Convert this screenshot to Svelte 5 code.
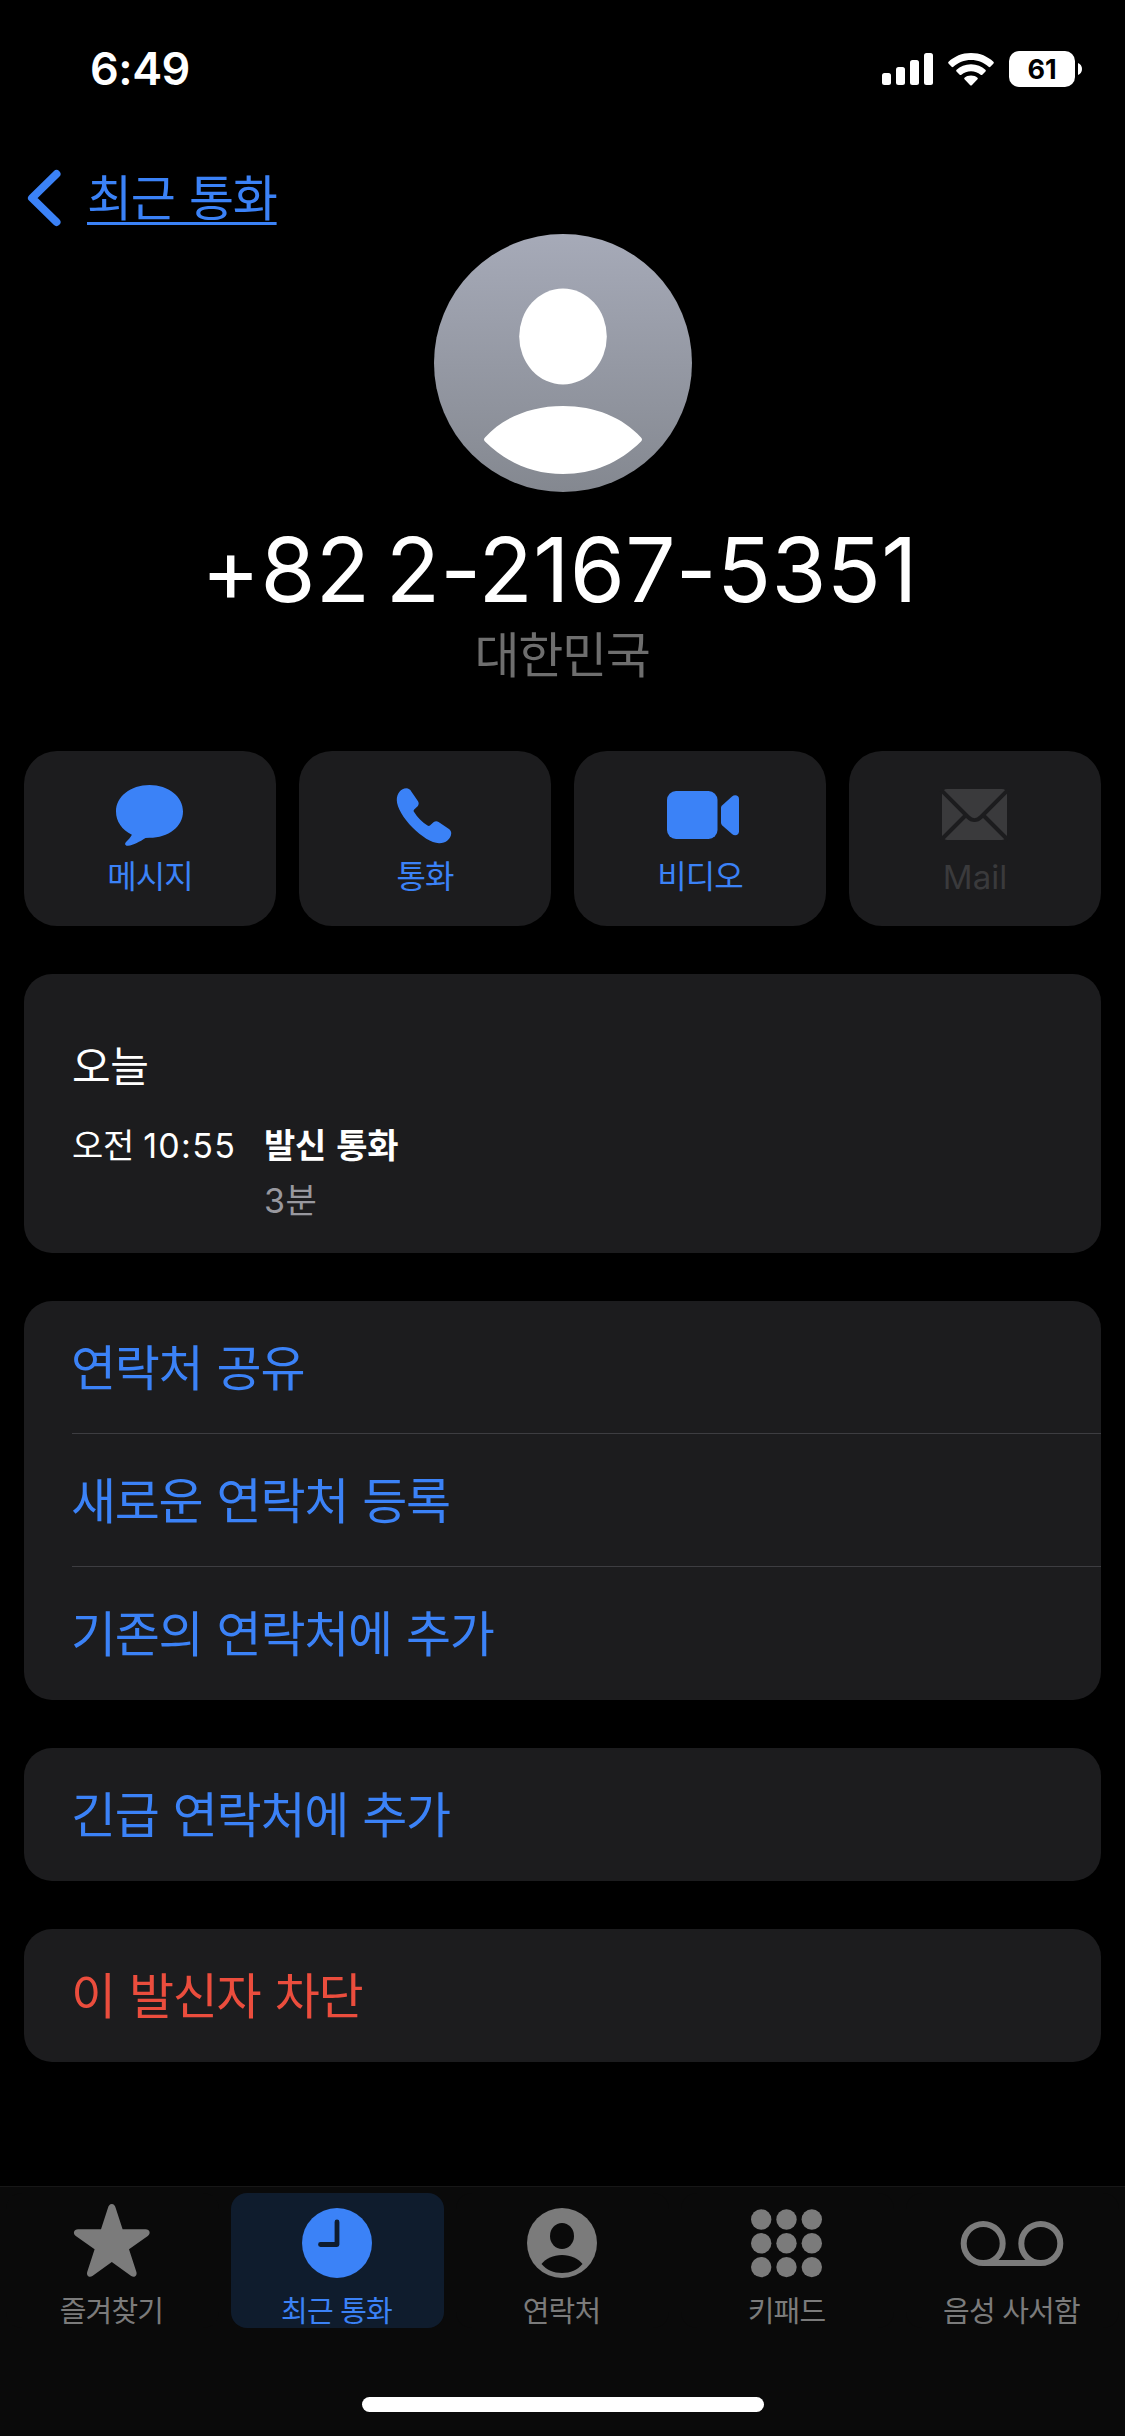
<script lang="ts">
	const actions = [
		{ id: 'message', label: '메시지', disabled: false },
		{ id: 'call', label: '통화', disabled: false },
		{ id: 'video', label: '비디오', disabled: false },
		{ id: 'mail', label: 'Mail', disabled: true }
	];

	const groups = [
		{ danger: false, rows: ['연락처 공유', '새로운 연락처 등록', '기존의 연락처에 추가'] },
		{ danger: false, rows: ['긴급 연락처에 추가'] },
		{ danger: true, rows: ['이 발신자 차단'] }
	];

	const tabs = [
		{ id: 'favorites', label: '즐겨찾기' },
		{ id: 'recents', label: '최근 통화' },
		{ id: 'contacts', label: '연락처' },
		{ id: 'keypad', label: '키패드' },
		{ id: 'voicemail', label: '음성 사서함' }
	];

	let active = $state('recents');
	const dots = [0, 1, 2];
</script>

<div class="screen">
	<header class="status">
		<span class="time">6:49</span>
		<div class="indicators">
			<svg class="signal" width="51" height="32" viewBox="0 0 51 32">
				<rect x="0" y="20" width="9" height="12" rx="2.5" />
				<rect x="14" y="14" width="9" height="18" rx="2.5" />
				<rect x="28" y="7" width="9" height="25" rx="2.5" />
				<rect x="42" y="0" width="9" height="32" rx="2.5" />
			</svg>
			<svg class="wifi" width="46" height="33" viewBox="0 0 46 33">
				<path d="M23 0C32 0 39.8 3.4 45.4 8.8C46 9.4 46 10 45.5 10.6L42.4 13.8C41.8 14.4 41.2 14.4 40.6 13.8C36 9.5 29.8 7 23 7S10 9.5 5.4 13.8C4.8 14.4 4.2 14.4 3.6 13.8L.5 10.6C0 10 0 9.4 .6 8.8C6.2 3.4 14 0 23 0Z" />
				<path d="M23 11.2C28.8 11.2 33.8 13.3 37.4 16.7C38 17.3 38 17.9 37.5 18.5L34.3 21.7C33.8 22.3 33.2 22.2 32.6 21.7C30 19.4 26.7 18.2 23 18.2S16 19.4 13.4 21.7C12.8 22.2 12.2 22.3 11.7 21.7L8.5 18.5C8 17.9 8 17.3 8.6 16.7C12.2 13.3 17.2 11.2 23 11.2Z" />
				<path d="M23 22.4C25.6 22.4 27.8 23.2 29.5 24.7C30 25.2 30 25.8 29.5 26.3L23.8 32.2C23.3 32.7 22.7 32.7 22.2 32.2L16.5 26.3C16 25.8 16 25.2 16.5 24.7C18.2 23.2 20.4 22.4 23 22.4Z" />
			</svg>
			<div class="battery">61</div>
			<svg class="battery-cap" width="4" height="12" viewBox="0 0 4 12">
				<path d="M0 0C2.5 1 4 3.2 4 6S2.5 11 0 12Z" />
			</svg>
		</div>
	</header>

	<nav class="nav">
		<svg width="34" height="58" viewBox="0 0 34 58">
			<path d="M29.5 5L5 29L29.5 53" />
		</svg>
		<span class="back">최근 통화</span>
	</nav>

	<section class="profile">
		<svg class="avatar" width="258" height="258" viewBox="0 0 258 258">
			<defs>
				<linearGradient id="avatar-bg" x1="0" y1="0" x2="0" y2="1">
					<stop offset="0" stop-color="#a6aab8" />
					<stop offset="1" stop-color="#848890" />
				</linearGradient>
			</defs>
			<circle cx="129" cy="129" r="129" fill="url(#avatar-bg)" />
			<ellipse cx="129" cy="102.5" rx="43.8" ry="48" fill="#fff" />
			<path d="M51 203.5C69 183.5 97 172 129 172S189 183.5 207 203.5Q209 205.5 207 207.5C185 229 159 240 129 240S73 229 51 207.5Q49 205.5 51 203.5Z" fill="#fff" />
		</svg>
		<h1>+82 2-2167-5351</h1>
		<p>대한민국</p>
	</section>

	<section class="actions">
		{#each actions as action}
			<button class="action" disabled={action.disabled}>
				<svg width="80" height="64" viewBox="0 0 80 64">
					{#if action.id === 'message'}
						<path d="M39.5 2C58.5 2 73 13.5 73 28.5S58.5 54.8 39.5 54.8L35.5 54.9C30 58.5 23.5 62 18 62.7C15.5 63 14.3 61 15.8 59.2C18 56.8 20.5 54.5 21.9 51.7C12 47 6 38.5 6 28.5C6 13.5 20.5 2 39.5 2Z" />
					{:else if action.id === 'call'}
						<path d="M21.3 5.3C23.6 5.3 25.2 6.6 26.3 8.4L33 18.3C34 20 33.9 21.3 32.9 23L29.2 26.4C28.4 27.3 28.5 28 29.1 29C32.5 34.5 37 39 42.5 42.6C43.6 43.3 44.3 43.2 45.2 42.3L48.8 39C50.3 37.9 52 37.9 53.6 38.9L63.6 45.7C65.5 47.1 66.4 48.4 66.2 50.7C65.6 56.2 60.5 60.4 54 60.2C46.5 60 36.5 53.5 27.5 44.5C18.3 35.2 11.9 24.5 11.8 17.3C11.7 10.5 16 5.4 21.3 5.3Z" />
					{:else if action.id === 'video'}
						<rect x="7" y="8" width="50.5" height="48" rx="9" />
						<path d="M61 25C61 23.8 61.4 23 62.3 22.2L72 13.6C74.8 11.2 79 12.4 79 16V48.6C79 52.2 74.8 53.4 72 51L62.3 42.4C61.4 41.6 61 40.8 61 39.6Z" />
					{:else}
						<rect x="7" y="6" width="65" height="51" rx="5" />
						<g class="fold">
							<path d="M6 6.8L33 34C37 38 42 38 46 34L73 6.8" />
							<path d="M31 32L6 57M48 32L73 57" />
						</g>
					{/if}
				</svg>
				<span class:latin={action.id === 'mail'}>{action.label}</span>
			</button>
		{/each}
	</section>

	<section class="log">
		<h2>오늘</h2>
		<div class="entry">
			<span>오전 <span class="clock">10:55</span></span>
			<strong>발신 통화</strong>
			<span class="duration">3분</span>
		</div>
	</section>

	{#each groups as group}
		<section class="group" class:danger={group.danger}>
			{#each group.rows as row}
				<div class="row">{row}</div>
			{/each}
		</section>
	{/each}

	<footer class="tabbar">
		<div class="tabs">
			{#each tabs as tab}
				<button class="tab" class:active={active === tab.id} onclick={() => (active = tab.id)}>
					<svg width="110" height="84" viewBox="0 0 110 84">
						{#if tab.id === 'favorites'}
							<path d="M54.8 11C57 11 58 12.8 58.6 14.8L65.6 36.3H88.5C93 36.3 94 40.8 90.8 43L72 56.3L79.4 79C80.4 82.8 77.3 85 74.2 83L54.8 69L35.4 83C32.3 85 29.2 82.8 30.2 79L37.6 56.3L18.8 43C15.6 40.8 16.6 36.3 21.1 36.3H44L51 14.8C51.6 12.8 52.6 11 54.8 11Z" />
						{:else if tab.id === 'recents'}
							<circle cx="55" cy="50" r="35" />
							<path class="hands" d="M55 29V51.5H38.5" />
						{:else if tab.id === 'contacts'}
							<circle cx="55" cy="50" r="35" />
							<ellipse class="hole" cx="55" cy="43" rx="12" ry="13" />
							<path class="hole" d="M34.5 71C39 65.5 46 62 55 62S71 65.5 75.5 71C70.5 77 63.5 80 55 80S39.5 77 34.5 71Z" />
						{:else if tab.id === 'keypad'}
							{#each dots as r}
								{#each dots as c}
									<circle cx={29.2 + c * 25.3} cy={26.5 + r * 23.8} r="10.2" />
								{/each}
							{/each}
						{:else}
							<g class="tape">
								<circle cx="26.2" cy="50.5" r="19.5" />
								<circle cx="83.8" cy="50.5" r="19.5" />
								<path d="M26.2 70H83.8" />
							</g>
						{/if}
					</svg>
					<span>{tab.label}</span>
				</button>
			{/each}
		</div>
		<div class="home-indicator"></div>
	</footer>
</div>

<style>
	:global(body) {
		background: #000;
	}

	.screen {
		--blue: #3b82f7;
		--card: #1c1c1e;
		width: 1125px;
		height: 2436px;
		display: flex;
		flex-direction: column;
		overflow: hidden;
		background: #000;
		color: #fff;
		font-family: Inter, "Noto Sans CJK KR", sans-serif;
	}

	svg {
		display: block;
		flex: none;
		overflow: visible;
		fill: currentColor;
	}

	button {
		border: 0;
		padding: 0;
		color: inherit;
		font: inherit;
	}

	h1,
	h2,
	p {
		margin: 0;
		font-weight: 400;
	}

	/* Status bar */
	.status {
		height: 161px;
		box-sizing: border-box;
		padding: 46px 43px 0 90px;
		display: flex;
		justify-content: space-between;
		align-items: flex-start;
	}

	.time {
		font-size: 45px;
		font-weight: 600;
		line-height: 46px;
		letter-spacing: -0.5px;
	}

	.indicators {
		height: 46px;
		display: flex;
		align-items: center;
	}

	.wifi {
		margin-left: 15px;
	}

	.battery {
		width: 66px;
		height: 36px;
		margin: 0 3px 0 15px;
		border-radius: 10px;
		background: #fff;
		color: #000;
		font-size: 27px;
		font-weight: 700;
		line-height: 37px;
		text-align: center;
	}

	/* Navigation */
	.nav {
		height: 73px;
		padding-left: 27px;
		display: flex;
		align-items: center;
		gap: 26px;
		color: var(--blue);
	}

	.nav svg {
		fill: none;
		stroke: currentColor;
		stroke-width: 8;
		stroke-linecap: round;
		stroke-linejoin: round;
	}

	.back {
		padding-top: 2px;
		font-size: 49px;
		line-height: 73px;
		letter-spacing: -1.3px;
		word-spacing: 2px;
		text-decoration: underline;
		text-decoration-thickness: 3px;
		text-underline-offset: 6px;
		text-decoration-skip-ink: none;
	}

	/* Profile */
	.profile {
		display: flex;
		flex-direction: column;
		align-items: center;
	}

	h1 {
		margin-top: 28px;
		padding-right: 6px;
		font-size: 89px;
		line-height: 100px;
		letter-spacing: 0.3px;
		word-spacing: -10px;
		white-space: nowrap;
	}

	.profile p {
		margin-top: 6px;
		padding-right: 1px;
		color: #6e6e6e;
		font-size: 49px;
		line-height: 60px;
		letter-spacing: -1.3px;
	}

	/* Actions */
	.actions {
		margin: 65px 24px 0;
		display: grid;
		grid-template-columns: repeat(4, 1fr);
		gap: 23px;
	}

	.action {
		height: 175px;
		padding-top: 32px;
		display: flex;
		flex-direction: column;
		align-items: center;
		gap: 12px;
		border-radius: 33px;
		background: var(--card);
		color: var(--blue);
		font-size: 32px;
		line-height: 36px;
		letter-spacing: -1px;
	}

	.action:disabled {
		color: #3a3a3c;
	}

	.action .latin {
		font-size: 33px;
		letter-spacing: 0;
	}

	.fold {
		fill: none;
		stroke: var(--card);
		stroke-width: 4;
	}

	/* Call log */
	.log {
		margin: 48px 24px 0;
		padding: 68px 48px 30px;
		border-radius: 28px;
		background: var(--card);
	}

	h2 {
		font-size: 42px;
		line-height: 50px;
		letter-spacing: -0.5px;
	}

	.entry {
		margin-top: 32px;
		display: grid;
		grid-template-columns: 192px 1fr;
		row-gap: 11px;
		font-size: 34px;
		line-height: 44px;
		letter-spacing: -0.3px;
	}

	.clock {
		letter-spacing: 1.3px;
	}

	.entry strong {
		font-weight: 600;
		word-spacing: 2px;
	}

	.duration {
		grid-column: 2;
		color: #98989f;
		letter-spacing: 0.5px;
	}

	/* Grouped rows */
	.group {
		margin: 48px 24px 0;
		border-radius: 28px;
		background: var(--card);
		color: var(--blue);
	}

	.group.danger {
		color: #eb4d3d;
	}

	.row {
		height: 133px;
		box-sizing: border-box;
		margin-left: 48px;
		font-size: 49px;
		line-height: 135px;
		letter-spacing: -1.3px;
		word-spacing: 1.8px;
		text-indent: -1px;
	}

	.row:not(:last-child) {
		border-bottom: 1px solid #3d3d41;
	}

	/* Tab bar */
	.tabbar {
		height: 250px;
		box-sizing: border-box;
		margin-top: auto;
		display: flex;
		flex-direction: column;
		align-items: center;
		border-top: 1px solid #171717;
		background: #0a0a0a;
		color: #7b7b7b;
	}

	.tabs {
		width: 100%;
		margin-top: 6px;
		display: grid;
		grid-template-columns: repeat(5, 225px);
		justify-items: center;
	}

	.tab {
		width: 213px;
		height: 135px;
		padding-right: 2px;
		display: flex;
		flex-direction: column;
		align-items: center;
		gap: 17px;
		border-radius: 16px;
		background: #0a0a0a;
		font-size: 29px;
		line-height: 36px;
		letter-spacing: -0.8px;
	}

	.tab.active {
		background: #0f1c2d;
		color: var(--blue);
	}

	.hands {
		fill: none;
		stroke: #0f1c2d;
		stroke-width: 4.8;
		stroke-linecap: round;
		stroke-linejoin: round;
	}

	.hole {
		fill: #0a0a0a;
	}

	.tape {
		fill: none;
		stroke: currentColor;
		stroke-width: 6;
	}

	.home-indicator {
		width: 402px;
		height: 15px;
		margin-top: 69px;
		border-radius: 8px;
		background: #fff;
	}
</style>
